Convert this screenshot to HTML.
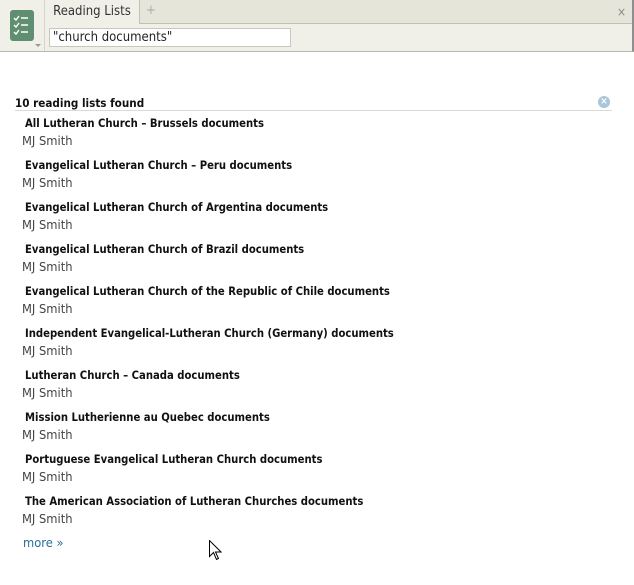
<!DOCTYPE html>
<html><head><style>
body{margin:0;width:634px;height:585px;background:#fff;font-family:"DejaVu Sans Condensed","Liberation Sans",sans-serif;position:relative;overflow:hidden}
.hdr{position:absolute;left:0;top:0;width:632px;height:51px;background:#f1f0e8;border-bottom:1px solid #b9b8ae;border-right:2px solid #8f8f8f}
.tabbar{position:absolute;left:45px;top:0;width:587px;height:23px;background:#e6e5d9;border-bottom:1px solid #c2c1b5}
.side{position:absolute;left:0;top:0;width:44px;height:51px;border-right:1px solid #d6d5ca;background:#f1f0e8}
.icon{position:absolute;left:10px;top:10px;width:24px;height:31px;background:#5f8e70;border-radius:3px}
.tab{position:absolute;left:45px;top:0;width:94px;height:24px;background:#f1f0e8;border-right:1px solid #c2c1b5;font-size:13px;color:#333;line-height:23px;text-align:center}
.inp{position:absolute;left:49px;top:28px;width:237px;height:17px;border:1px solid #c8c7bd;background:#fff;font-size:13px;line-height:17px;padding-left:3px;color:#222}
.t{position:absolute;left:25px;font-size:11.2px;font-weight:bold;color:#111}
.a{position:absolute;left:22px;font-size:12.8px;color:#444}
</style></head><body>
<div class="hdr"></div>
<div class="tabbar"></div>
<div class="side"></div>
<div class="icon"><svg width="24" height="31" viewBox="0 0 24 31"><g stroke="#fff" stroke-width="1.4" fill="none"><path d="M4 8l2 2 3-4M11 8h7M4 15l2 2 3-4M11 15h7M4 22l2 2 3-4M11 22h7"/></g></svg></div>
<div style="position:absolute;left:35px;top:44px;width:0;height:0;border-left:3px solid transparent;border-right:3px solid transparent;border-top:3px solid #999"></div>
<div class="tab">Reading Lists</div>
<div style="position:absolute;left:146px;top:3px;font-size:13px;color:#aaa">+</div>
<div style="position:absolute;left:617px;top:5px;font-size:12px;color:#888">×</div>
<div class="inp">"church documents"</div>
<div style="position:absolute;left:15px;top:96px;font-size:11.6px;font-weight:bold;color:#111">10 reading lists found</div>
<div style="position:absolute;left:15px;top:110px;width:597px;height:1px;background:#dcdbd2"></div>
<div style="position:absolute;left:598px;top:96px;width:12px;height:12px;border-radius:50%;background:#a9c6da;color:#fff;font-size:10px;line-height:12px;text-align:center;font-weight:bold">×</div>
<div class="t" style="top:117px">All Lutheran Church – Brussels documents</div><div class="a" style="top:134px">MJ Smith</div>
<div class="t" style="top:159px">Evangelical Lutheran Church – Peru documents</div><div class="a" style="top:176px">MJ Smith</div>
<div class="t" style="top:201px">Evangelical Lutheran Church of Argentina documents</div><div class="a" style="top:218px">MJ Smith</div>
<div class="t" style="top:243px">Evangelical Lutheran Church of Brazil documents</div><div class="a" style="top:260px">MJ Smith</div>
<div class="t" style="top:285px">Evangelical Lutheran Church of the Republic of Chile documents</div><div class="a" style="top:302px">MJ Smith</div>
<div class="t" style="top:327px">Independent Evangelical-Lutheran Church (Germany) documents</div><div class="a" style="top:344px">MJ Smith</div>
<div class="t" style="top:369px">Lutheran Church – Canada documents</div><div class="a" style="top:386px">MJ Smith</div>
<div class="t" style="top:411px">Mission Lutherienne au Quebec documents</div><div class="a" style="top:428px">MJ Smith</div>
<div class="t" style="top:453px">Portuguese Evangelical Lutheran Church documents</div><div class="a" style="top:470px">MJ Smith</div>
<div class="t" style="top:495px">The American Association of Lutheran Churches documents</div><div class="a" style="top:512px">MJ Smith</div>
<div style="position:absolute;left:23px;top:536px;font-size:12.8px;color:#2a6f99">more »</div>
<svg style="position:absolute;left:209px;top:540px" width="13" height="21" viewBox="0 0 13 21"><path d="M0.5 0.5v16l4-4 3 7 2-1-3-6.5h5.5z" fill="#fff" stroke="#000"/></svg>
</body></html>
